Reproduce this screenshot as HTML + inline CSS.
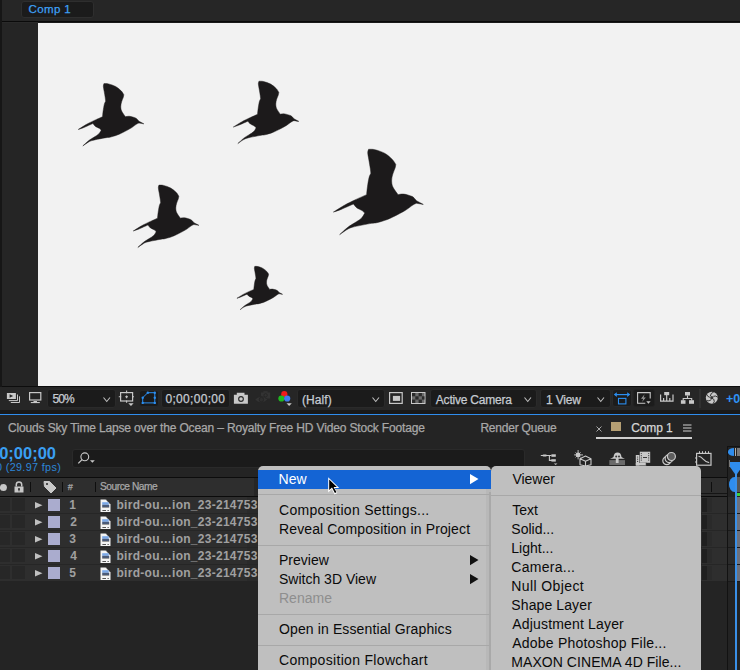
<!DOCTYPE html>
<html><head><meta charset="utf-8">
<style>
*{margin:0;padding:0;box-sizing:border-box}
html,body{width:740px;height:670px;overflow:hidden;background:#242424;font-family:"Liberation Sans",sans-serif;position:relative}
.a{position:absolute}
.t{position:absolute;white-space:nowrap;line-height:1}
svg{position:absolute;overflow:visible}
</style></head><body>
<div class="a" style="left:0px;top:0px;width:740px;height:21px;background:#262626;"></div>
<div class="a" style="left:21px;top:1px;width:73px;height:17px;background:#1b1b1b;border:1px solid #2e2e2e;border-radius:3px"></div>
<div class="t" style="left:28.50px;top:3.87px;font-size:11.5px;color:#3ea0f5;letter-spacing:0.400px;-webkit-text-stroke:0.25px currentColor">Comp 1</div>
<div class="a" style="left:2px;top:21px;width:738px;height:1px;background:#0a0a0a;"></div>
<div class="a" style="left:2px;top:22px;width:738px;height:1px;background:#1a1a1a;"></div>
<div class="a" style="left:2px;top:22px;width:36px;height:1px;background:#2a2a2a;"></div>
<div class="a" style="left:2px;top:23px;width:36px;height:363px;background:#252525;"></div>
<div class="a" style="left:0px;top:0px;width:2px;height:410px;background:#161616;"></div>
<div class="a" style="left:38px;top:23px;width:702px;height:363px;background:#f2f2f2;"></div>
<svg style="left:0;top:0" width="740" height="386"><path transform="translate(75.8 80.5) scale(0.1035)" d="M272.0 30.0 C279.5 30.5 298.2 28.3 317.0 33.0 C335.8 37.7 364.8 46.8 385.0 58.0 C405.2 69.2 424.8 86.8 438.0 100.0 C451.2 113.2 459.7 130.8 464.0 137.0 C463.2 141.3 462.5 151.7 459.0 163.0 C455.5 174.3 447.0 190.8 443.0 205.0 C439.0 219.2 435.0 233.0 435.0 248.0 C435.0 263.0 435.5 278.0 443.0 295.0 C450.5 312.0 473.8 340.8 480.0 350.0 C486.7 349.3 503.8 344.0 520.0 346.0 C536.2 348.0 564.3 356.8 577.0 362.0 C589.7 367.2 590.5 371.8 596.0 377.0 C601.5 382.2 607.7 390.3 610.0 393.0 L658.0 419.0 L610.0 411.0 C605.8 413.0 598.3 414.5 585.0 423.0 C571.7 431.5 551.0 449.2 530.0 462.0 C509.0 474.8 480.7 489.2 459.0 500.0 C437.3 510.8 421.5 519.0 400.0 527.0 C378.5 535.0 347.5 543.8 330.0 548.0 C312.5 552.2 312.3 549.2 295.0 552.0 C277.7 554.8 248.8 560.3 226.0 565.0 C203.2 569.7 175.5 574.8 158.0 580.0 C140.5 585.2 136.0 587.3 121.0 596.0 C106.0 604.7 76.8 626.0 68.0 632.0 C77.7 623.3 108.3 593.8 126.0 580.0 C143.7 566.2 158.2 559.5 174.0 549.0 C189.8 538.5 209.2 528.5 221.0 517.0 C232.8 505.5 241.0 486.2 245.0 480.0 C241.8 477.0 235.2 468.0 226.0 462.0 C216.8 456.0 200.2 451.7 190.0 444.0 C179.8 436.3 169.2 420.7 165.0 416.0 C150.7 422.3 102.5 444.5 79.0 454.0 C55.5 463.5 33.2 469.8 24.0 473.0 C37.5 464.7 80.0 437.2 105.0 423.0 C130.0 408.8 148.5 400.2 174.0 388.0 C199.5 375.8 244.0 356.3 258.0 350.0 C259.0 340.8 261.2 314.8 264.0 295.0 C266.8 275.2 271.0 246.8 275.0 231.0 C279.0 215.2 285.8 205.2 288.0 200.0 C287.3 194.2 286.3 180.8 284.0 165.0 C281.7 149.2 277.0 123.3 274.0 105.0 C271.0 86.7 266.3 67.5 266.0 55.0 C265.7 42.5 271.0 34.2 272.0 30.0 Z" fill="#1c1a1b" stroke="#1c1a1b" stroke-width="0.45" vector-effect="non-scaling-stroke"/><path transform="translate(230.8 78.1) scale(0.1035)" d="M272.0 30.0 C279.5 30.5 298.2 28.3 317.0 33.0 C335.8 37.7 364.8 46.8 385.0 58.0 C405.2 69.2 424.8 86.8 438.0 100.0 C451.2 113.2 459.7 130.8 464.0 137.0 C463.2 141.3 462.5 151.7 459.0 163.0 C455.5 174.3 447.0 190.8 443.0 205.0 C439.0 219.2 435.0 233.0 435.0 248.0 C435.0 263.0 435.5 278.0 443.0 295.0 C450.5 312.0 473.8 340.8 480.0 350.0 C486.7 349.3 503.8 344.0 520.0 346.0 C536.2 348.0 564.3 356.8 577.0 362.0 C589.7 367.2 590.5 371.8 596.0 377.0 C601.5 382.2 607.7 390.3 610.0 393.0 L658.0 419.0 L610.0 411.0 C605.8 413.0 598.3 414.5 585.0 423.0 C571.7 431.5 551.0 449.2 530.0 462.0 C509.0 474.8 480.7 489.2 459.0 500.0 C437.3 510.8 421.5 519.0 400.0 527.0 C378.5 535.0 347.5 543.8 330.0 548.0 C312.5 552.2 312.3 549.2 295.0 552.0 C277.7 554.8 248.8 560.3 226.0 565.0 C203.2 569.7 175.5 574.8 158.0 580.0 C140.5 585.2 136.0 587.3 121.0 596.0 C106.0 604.7 76.8 626.0 68.0 632.0 C77.7 623.3 108.3 593.8 126.0 580.0 C143.7 566.2 158.2 559.5 174.0 549.0 C189.8 538.5 209.2 528.5 221.0 517.0 C232.8 505.5 241.0 486.2 245.0 480.0 C241.8 477.0 235.2 468.0 226.0 462.0 C216.8 456.0 200.2 451.7 190.0 444.0 C179.8 436.3 169.2 420.7 165.0 416.0 C150.7 422.3 102.5 444.5 79.0 454.0 C55.5 463.5 33.2 469.8 24.0 473.0 C37.5 464.7 80.0 437.2 105.0 423.0 C130.0 408.8 148.5 400.2 174.0 388.0 C199.5 375.8 244.0 356.3 258.0 350.0 C259.0 340.8 261.2 314.8 264.0 295.0 C266.8 275.2 271.0 246.8 275.0 231.0 C279.0 215.2 285.8 205.2 288.0 200.0 C287.3 194.2 286.3 180.8 284.0 165.0 C281.7 149.2 277.0 123.3 274.0 105.0 C271.0 86.7 266.3 67.5 266.0 55.0 C265.7 42.5 271.0 34.2 272.0 30.0 Z" fill="#1c1a1b" stroke="#1c1a1b" stroke-width="0.45" vector-effect="non-scaling-stroke"/><path transform="translate(130.8 182) scale(0.1035)" d="M272.0 30.0 C279.5 30.5 298.2 28.3 317.0 33.0 C335.8 37.7 364.8 46.8 385.0 58.0 C405.2 69.2 424.8 86.8 438.0 100.0 C451.2 113.2 459.7 130.8 464.0 137.0 C463.2 141.3 462.5 151.7 459.0 163.0 C455.5 174.3 447.0 190.8 443.0 205.0 C439.0 219.2 435.0 233.0 435.0 248.0 C435.0 263.0 435.5 278.0 443.0 295.0 C450.5 312.0 473.8 340.8 480.0 350.0 C486.7 349.3 503.8 344.0 520.0 346.0 C536.2 348.0 564.3 356.8 577.0 362.0 C589.7 367.2 590.5 371.8 596.0 377.0 C601.5 382.2 607.7 390.3 610.0 393.0 L658.0 419.0 L610.0 411.0 C605.8 413.0 598.3 414.5 585.0 423.0 C571.7 431.5 551.0 449.2 530.0 462.0 C509.0 474.8 480.7 489.2 459.0 500.0 C437.3 510.8 421.5 519.0 400.0 527.0 C378.5 535.0 347.5 543.8 330.0 548.0 C312.5 552.2 312.3 549.2 295.0 552.0 C277.7 554.8 248.8 560.3 226.0 565.0 C203.2 569.7 175.5 574.8 158.0 580.0 C140.5 585.2 136.0 587.3 121.0 596.0 C106.0 604.7 76.8 626.0 68.0 632.0 C77.7 623.3 108.3 593.8 126.0 580.0 C143.7 566.2 158.2 559.5 174.0 549.0 C189.8 538.5 209.2 528.5 221.0 517.0 C232.8 505.5 241.0 486.2 245.0 480.0 C241.8 477.0 235.2 468.0 226.0 462.0 C216.8 456.0 200.2 451.7 190.0 444.0 C179.8 436.3 169.2 420.7 165.0 416.0 C150.7 422.3 102.5 444.5 79.0 454.0 C55.5 463.5 33.2 469.8 24.0 473.0 C37.5 464.7 80.0 437.2 105.0 423.0 C130.0 408.8 148.5 400.2 174.0 388.0 C199.5 375.8 244.0 356.3 258.0 350.0 C259.0 340.8 261.2 314.8 264.0 295.0 C266.8 275.2 271.0 246.8 275.0 231.0 C279.0 215.2 285.8 205.2 288.0 200.0 C287.3 194.2 286.3 180.8 284.0 165.0 C281.7 149.2 277.0 123.3 274.0 105.0 C271.0 86.7 266.3 67.5 266.0 55.0 C265.7 42.5 271.0 34.2 272.0 30.0 Z" fill="#1c1a1b" stroke="#1c1a1b" stroke-width="0.45" vector-effect="non-scaling-stroke"/><path transform="translate(330 145) scale(0.1418)" d="M272.0 30.0 C279.5 30.5 298.2 28.3 317.0 33.0 C335.8 37.7 364.8 46.8 385.0 58.0 C405.2 69.2 424.8 86.8 438.0 100.0 C451.2 113.2 459.7 130.8 464.0 137.0 C463.2 141.3 462.5 151.7 459.0 163.0 C455.5 174.3 447.0 190.8 443.0 205.0 C439.0 219.2 435.0 233.0 435.0 248.0 C435.0 263.0 435.5 278.0 443.0 295.0 C450.5 312.0 473.8 340.8 480.0 350.0 C486.7 349.3 503.8 344.0 520.0 346.0 C536.2 348.0 564.3 356.8 577.0 362.0 C589.7 367.2 590.5 371.8 596.0 377.0 C601.5 382.2 607.7 390.3 610.0 393.0 L658.0 419.0 L610.0 411.0 C605.8 413.0 598.3 414.5 585.0 423.0 C571.7 431.5 551.0 449.2 530.0 462.0 C509.0 474.8 480.7 489.2 459.0 500.0 C437.3 510.8 421.5 519.0 400.0 527.0 C378.5 535.0 347.5 543.8 330.0 548.0 C312.5 552.2 312.3 549.2 295.0 552.0 C277.7 554.8 248.8 560.3 226.0 565.0 C203.2 569.7 175.5 574.8 158.0 580.0 C140.5 585.2 136.0 587.3 121.0 596.0 C106.0 604.7 76.8 626.0 68.0 632.0 C77.7 623.3 108.3 593.8 126.0 580.0 C143.7 566.2 158.2 559.5 174.0 549.0 C189.8 538.5 209.2 528.5 221.0 517.0 C232.8 505.5 241.0 486.2 245.0 480.0 C241.8 477.0 235.2 468.0 226.0 462.0 C216.8 456.0 200.2 451.7 190.0 444.0 C179.8 436.3 169.2 420.7 165.0 416.0 C150.7 422.3 102.5 444.5 79.0 454.0 C55.5 463.5 33.2 469.8 24.0 473.0 C37.5 464.7 80.0 437.2 105.0 423.0 C130.0 408.8 148.5 400.2 174.0 388.0 C199.5 375.8 244.0 356.3 258.0 350.0 C259.0 340.8 261.2 314.8 264.0 295.0 C266.8 275.2 271.0 246.8 275.0 231.0 C279.0 215.2 285.8 205.2 288.0 200.0 C287.3 194.2 286.3 180.8 284.0 165.0 C281.7 149.2 277.0 123.3 274.0 105.0 C271.0 86.7 266.3 67.5 266.0 55.0 C265.7 42.5 271.0 34.2 272.0 30.0 Z" fill="#1c1a1b" stroke="#1c1a1b" stroke-width="0.45" vector-effect="non-scaling-stroke"/><path transform="translate(235.2 264.2) scale(0.072)" d="M272.0 30.0 C279.5 30.5 298.2 28.3 317.0 33.0 C335.8 37.7 364.8 46.8 385.0 58.0 C405.2 69.2 424.8 86.8 438.0 100.0 C451.2 113.2 459.7 130.8 464.0 137.0 C463.2 141.3 462.5 151.7 459.0 163.0 C455.5 174.3 447.0 190.8 443.0 205.0 C439.0 219.2 435.0 233.0 435.0 248.0 C435.0 263.0 435.5 278.0 443.0 295.0 C450.5 312.0 473.8 340.8 480.0 350.0 C486.7 349.3 503.8 344.0 520.0 346.0 C536.2 348.0 564.3 356.8 577.0 362.0 C589.7 367.2 590.5 371.8 596.0 377.0 C601.5 382.2 607.7 390.3 610.0 393.0 L658.0 419.0 L610.0 411.0 C605.8 413.0 598.3 414.5 585.0 423.0 C571.7 431.5 551.0 449.2 530.0 462.0 C509.0 474.8 480.7 489.2 459.0 500.0 C437.3 510.8 421.5 519.0 400.0 527.0 C378.5 535.0 347.5 543.8 330.0 548.0 C312.5 552.2 312.3 549.2 295.0 552.0 C277.7 554.8 248.8 560.3 226.0 565.0 C203.2 569.7 175.5 574.8 158.0 580.0 C140.5 585.2 136.0 587.3 121.0 596.0 C106.0 604.7 76.8 626.0 68.0 632.0 C77.7 623.3 108.3 593.8 126.0 580.0 C143.7 566.2 158.2 559.5 174.0 549.0 C189.8 538.5 209.2 528.5 221.0 517.0 C232.8 505.5 241.0 486.2 245.0 480.0 C241.8 477.0 235.2 468.0 226.0 462.0 C216.8 456.0 200.2 451.7 190.0 444.0 C179.8 436.3 169.2 420.7 165.0 416.0 C150.7 422.3 102.5 444.5 79.0 454.0 C55.5 463.5 33.2 469.8 24.0 473.0 C37.5 464.7 80.0 437.2 105.0 423.0 C130.0 408.8 148.5 400.2 174.0 388.0 C199.5 375.8 244.0 356.3 258.0 350.0 C259.0 340.8 261.2 314.8 264.0 295.0 C266.8 275.2 271.0 246.8 275.0 231.0 C279.0 215.2 285.8 205.2 288.0 200.0 C287.3 194.2 286.3 180.8 284.0 165.0 C281.7 149.2 277.0 123.3 274.0 105.0 C271.0 86.7 266.3 67.5 266.0 55.0 C265.7 42.5 271.0 34.2 272.0 30.0 Z" fill="#1c1a1b" stroke="#1c1a1b" stroke-width="0.45" vector-effect="non-scaling-stroke"/></svg>
<div class="a" style="left:2px;top:386px;width:738px;height:1px;background:#0d0d0d;"></div>
<div class="a" style="left:0px;top:387px;width:740px;height:23px;background:#262626;"></div>
<div class="a" style="left:0px;top:410px;width:740px;height:4px;background:#191919;"></div>
<div class="a" style="left:0px;top:414px;width:740px;height:1px;background:#2f8ded;"></div>
<svg style="left:6px;top:392px" width="16" height="12">
<rect x="0.9" y="1" width="9" height="6" fill="#c8c8c8"/>
<path d="M3.6 2.3 L7.2 4 L3.6 5.7Z" fill="#262626"/>
<path d="M11.5 2.5 V8.6 H2.8" fill="none" stroke="#c8c8c8" stroke-width="1"/>
<path d="M13.5 4.3 V10.5 H4.8" fill="none" stroke="#c8c8c8" stroke-width="1"/>
</svg>
<svg style="left:29px;top:392px" width="13" height="12">
<rect x="0.6" y="0.6" width="11.2" height="7.4" fill="none" stroke="#c8c8c8" stroke-width="1.2"/>
<rect x="4.5" y="9" width="3.5" height="1.2" fill="#c8c8c8"/>
<rect x="1.8" y="10" width="9" height="1.1" fill="#c8c8c8"/>
</svg>
<div class="a" style="left:47px;top:389px;width:69px;height:19px;background:#1b1b1b;border:1px solid #2a2a2a;border-radius:3px"></div>
<div class="t" style="left:52.50px;top:393.24px;font-size:12px;color:#c6cbd2;letter-spacing:-0.950px;-webkit-text-stroke:0.25px currentColor">50%</div>
<svg style="left:102.5px;top:396.5px" width="7.5" height="5"><path d="M0.5 0.5 L3.75 4.5 L7.0 0.5" fill="none" stroke="#bdbdbd" stroke-width="1.1"/></svg>
<svg style="left:118px;top:390px" width="17" height="17">
<rect x="2.6" y="2.6" width="12" height="8.4" fill="none" stroke="#c8c8c8" stroke-width="1.2"/>
<path d="M8.6 0.6 V3.2 M8.6 10.4 V12.8 M0.8 6.8 H3.2 M14 6.8 H16" stroke="#c8c8c8" stroke-width="1.1"/>
<path d="M7.2 6.8 H10 M8.6 5.4 V8.2" stroke="#c8c8c8" stroke-width="1.1"/>
<path d="M10.3 13.2 H15.6 L12.95 16Z" fill="#c8c8c8"/>
</svg>
<div class="a" style="left:139px;top:390px;width:20px;height:17px;background:#1a1a1a;border:1px solid #262626;border-radius:3px"></div>
<svg style="left:141px;top:391px" width="17" height="15">
<path d="M1.7 6.7 L6.8 1.7 H13.8 V11.9 H1.7Z" fill="none" stroke="#2b8ef0" stroke-width="1"/>
<g fill="#2b8ef0"><circle cx="1.7" cy="6.7" r="1.2"/><circle cx="6.8" cy="1.7" r="1.2"/><circle cx="13.8" cy="1.7" r="1.2"/><circle cx="13.8" cy="6.7" r="1.2"/><circle cx="13.8" cy="11.9" r="1.2"/><circle cx="1.7" cy="11.9" r="1.2"/></g>
</svg>
<div class="a" style="left:161px;top:389px;width:69px;height:19px;background:#1b1b1b;border:1px solid #2a2a2a;border-radius:3px"></div>
<div class="t" style="left:165.40px;top:393.14px;font-size:12px;color:#c6cbd2;letter-spacing:0.322px;-webkit-text-stroke:0.25px currentColor">0;00;00;00</div>
<svg style="left:233px;top:392px" width="16" height="13">
<path d="M3.8 0.8 H11.5 V2.8 H14.9 V11.8 H0.9 V2.8 H3.8Z" fill="#c8c8c8"/>
<circle cx="8" cy="7" r="2.9" fill="#262626"/><circle cx="8" cy="7" r="1.8" fill="#c8c8c8"/>
</svg>
<svg style="left:254px;top:390px" width="17" height="15">
<rect x="7" y="2.5" width="9.2" height="6" fill="#333"/><rect x="9.3" y="1.2" width="4.4" height="1.6" fill="#333"/>
<circle cx="11.6" cy="5.3" r="1.7" fill="none" stroke="#262626" stroke-width="1"/>
<path d="M0.6 9.6 Q7 3.2 13.8 9.6 Q7 16 0.6 9.6Z" fill="#333" stroke="#262626" stroke-width="0.8"/>
<circle cx="7.4" cy="9.6" r="2.2" fill="#2e2e2e" stroke="#262626" stroke-width="1"/>
</svg>
<svg style="left:278px;top:390px" width="16" height="17">
<circle cx="6.3" cy="4.2" r="3.1" fill="#f01a1a"/>
<circle cx="3.4" cy="8.5" r="3.1" fill="#1fb81f"/>
<circle cx="9.2" cy="8.5" r="3.1" fill="#3f7cf0"/>
<path d="M8.5 13.3 H13.8 L11.15 16Z" fill="#c8c8c8"/>
</svg>
<div class="a" style="left:297px;top:389px;width:88px;height:19px;background:#1b1b1b;border:1px solid #2a2a2a;border-radius:3px"></div>
<div class="t" style="left:302.00px;top:393.84px;font-size:12px;color:#c6cbd2;letter-spacing:0.060px;-webkit-text-stroke:0.25px currentColor">(Half)</div>
<svg style="left:371.8px;top:396.5px" width="7.5" height="5"><path d="M0.5 0.5 L3.75 4.5 L7.0 0.5" fill="none" stroke="#bdbdbd" stroke-width="1.1"/></svg>
<svg style="left:389px;top:392px" width="14" height="12">
<rect x="0.6" y="0.6" width="12.6" height="10.8" fill="none" stroke="#c8c8c8" stroke-width="1.2"/>
<rect x="3.9" y="3.9" width="7.2" height="5" fill="#c8c8c8"/>
</svg>
<svg style="left:411px;top:392px" width="15" height="12">
<rect x="0.5" y="0.5" width="13.5" height="11" fill="#6a6a6a" stroke="#c8c8c8" stroke-width="1"/>
<g fill="#2a2a2a"><rect x="1" y="1" width="3.3" height="3.3"/><rect x="7.6" y="1" width="3.3" height="3.3"/><rect x="4.3" y="4.3" width="3.3" height="3.3"/><rect x="10.9" y="4.3" width="2.6" height="3.3"/><rect x="1" y="7.6" width="3.3" height="3.4"/><rect x="7.6" y="7.6" width="3.3" height="3.4"/></g>
</svg>
<div class="a" style="left:430px;top:389px;width:107px;height:19px;background:#1b1b1b;border:1px solid #2a2a2a;border-radius:3px"></div>
<div class="t" style="left:435.80px;top:393.84px;font-size:12px;color:#c6cbd2;letter-spacing:-0.208px;-webkit-text-stroke:0.25px currentColor">Active Camera</div>
<svg style="left:523.5px;top:396.5px" width="7.5" height="5"><path d="M0.5 0.5 L3.75 4.5 L7.0 0.5" fill="none" stroke="#bdbdbd" stroke-width="1.1"/></svg>
<div class="a" style="left:540px;top:389px;width:71px;height:19px;background:#1b1b1b;border:1px solid #2a2a2a;border-radius:3px"></div>
<div class="t" style="left:546.00px;top:393.84px;font-size:12px;color:#c6cbd2;letter-spacing:-0.180px;-webkit-text-stroke:0.25px currentColor">1 View</div>
<svg style="left:597.2px;top:396.5px" width="7.5" height="5"><path d="M0.5 0.5 L3.75 4.5 L7.0 0.5" fill="none" stroke="#bdbdbd" stroke-width="1.1"/></svg>
<div class="a" style="left:612px;top:389px;width:20px;height:18px;background:#1c1c1c;border:1px solid #2a2a2a;border-radius:3px"></div>
<svg style="left:613px;top:392px" width="18" height="14">
<path d="M2.5 2.6 H15.5" stroke="#2b8ef0" stroke-width="1.2"/>
<path d="M0.8 2.6 L3.8 0.3 V4.9Z M17.2 2.6 L14.2 0.3 V4.9Z" fill="#2b8ef0"/>
<rect x="5.5" y="6.4" width="7.4" height="5.5" fill="none" stroke="#2b8ef0" stroke-width="1.1"/>
</svg>
<div class="a" style="left:633px;top:389px;width:22px;height:18px;background:#1c1c1c;border:1px solid #222;border-radius:3px"></div>
<svg style="left:636px;top:391px" width="17" height="14">
<path d="M14.2 7.4 V1.6 H1.6 V12.3 H9.3" fill="none" stroke="#c8c8c8" stroke-width="1.1"/>
<path d="M8.6 3.2 L5 7.8 H7.3 L6 11 L9.8 6.4 H7.5Z" fill="#9a9a9a"/>
<path d="M10.3 10.2 H14.6 L12.45 12.8Z" fill="#c8c8c8"/>
</svg>
<svg style="left:659px;top:391px" width="16" height="13">
<rect x="5.2" y="1" width="5" height="3.2" fill="#c8c8c8"/>
<path d="M1.6 3.5 V10.2 H14 V3.5 M7.7 4 V10 M4.6 10 V7 M10.8 10 V7" fill="none" stroke="#c8c8c8" stroke-width="1.2"/>
</svg>
<svg style="left:680px;top:391px" width="15" height="14">
<rect x="5" y="1" width="5" height="3.5" fill="#c8c8c8"/>
<path d="M7.5 4.5 V7.5 M3.2 9.5 V7.5 H11.7 V9.5" fill="none" stroke="#c8c8c8" stroke-width="1.1"/>
<rect x="0.9" y="9.2" width="4.6" height="3.6" fill="#c8c8c8"/><rect x="9" y="9.2" width="5" height="3.6" fill="#c8c8c8"/>
</svg>
<div class="a" style="left:699px;top:389px;width:2px;height:19px;background:#303030;"></div>
<svg style="left:705px;top:391px" width="14" height="14">
<circle cx="6.8" cy="6.7" r="6" fill="#c8c8c8"/>
<g stroke="#262626" stroke-width="0.9" fill="none">
<path d="M5.3 5.2 Q5.5 2 8.8 0.9"/><path d="M8.3 5.3 Q11 4.3 12.8 6.3"/><path d="M8.6 7.9 Q10.2 10.7 8.2 12.5"/><path d="M6.3 8.7 Q4 10.6 1.6 9.6"/><path d="M4.8 6.4 Q2.2 5.6 1.6 3.2"/>
</g>
<circle cx="6.8" cy="6.7" r="1.6" fill="#3a3a3a"/>
</svg>
<div class="t" style="left:726.00px;top:392.62px;font-size:12.5px;color:#2f92f5;font-weight:700;">+0</div>
<div class="t" style="left:8.00px;top:421.84px;font-size:12px;color:#a8a8a8;letter-spacing:-0.151px;-webkit-text-stroke:0.25px currentColor">Clouds Sky Time Lapse over the Ocean – Royalty Free HD Video Stock Footage</div>
<div class="t" style="left:480.40px;top:421.84px;font-size:12px;color:#a8a8a8;letter-spacing:-0.218px;-webkit-text-stroke:0.25px currentColor">Render Queue</div>
<svg style="left:595.5px;top:425.5px" width="6" height="6"><path d="M0.5 0.5 L5.5 5.5 M5.5 0.5 L0.5 5.5" stroke="#a8a8a8" stroke-width="1"/></svg>
<div class="a" style="left:611px;top:422px;width:10px;height:9px;background:#b59f73;"></div>
<div class="t" style="left:631.20px;top:421.84px;font-size:12px;color:#d6d6d6;letter-spacing:-0.100px;-webkit-text-stroke:0.25px currentColor">Comp 1</div>
<svg style="left:683px;top:424px" width="9" height="8"><path d="M0 1 H8.5 M0 4 H8.5 M0 7 H8.5" stroke="#cfcfcf" stroke-width="1.1"/></svg>
<div class="a" style="left:596px;top:437px;width:96px;height:2px;background:#cfcfcf;"></div>
<div class="t" style="left:-24.70px;top:445.03px;font-size:16.5px;color:#3a9ff2;font-weight:700;">0;00;00;00</div>
<div class="t" style="left:-4.00px;top:462.46px;font-size:10.8px;color:#2d86d8;letter-spacing:0.350px;">0 (29.97 fps)</div>
<div class="a" style="left:72px;top:449px;width:453px;height:19px;background:#1b1b1b;border:1px solid #2a2a2a;border-radius:3px"></div>
<svg style="left:77px;top:451px" width="20" height="15">
<circle cx="7.8" cy="5.8" r="3.9" fill="none" stroke="#c8c8c8" stroke-width="1.1"/>
<path d="M5 8.6 L1.3 12.4" stroke="#c8c8c8" stroke-width="1.3"/>
<path d="M13 9.3 H17.8 L15.4 11.7Z" fill="#c8c8c8"/>
</svg>
<div class="a" style="left:0px;top:477px;width:727px;height:1px;background:#0c0c0c;"></div>
<div class="a" style="left:0px;top:478px;width:727px;height:18px;background:#2e2e2e;"></div>
<div class="a" style="left:0px;top:496px;width:727px;height:1px;background:#0b0b0b;"></div>
<div class="a" style="left:30px;top:482px;width:1px;height:10px;background:#0e0e0e;"></div>
<div class="a" style="left:62px;top:482px;width:1px;height:10px;background:#0e0e0e;"></div>
<div class="a" style="left:95px;top:482px;width:1px;height:10px;background:#0e0e0e;"></div>
<svg style="left:0px;top:484px" width="8" height="8"><circle cx="3.4" cy="3.6" r="3.5" fill="#c8c8c8"/></svg>
<svg style="left:14px;top:481px" width="10" height="12">
<path d="M2.3 5.5 V3.6 A2.7 2.7 0 0 1 7.7 3.6 V5.5" fill="none" stroke="#c8c8c8" stroke-width="1.5"/>
<rect x="0.5" y="5.5" width="9" height="6" fill="#c8c8c8"/>
<circle cx="5" cy="8" r="1" fill="#2e2e2e"/><rect x="4.5" y="8" width="1" height="2.3" fill="#2e2e2e"/>
</svg>
<svg style="left:43px;top:480px" width="14" height="14">
<path d="M1 1.5 H6.5 L13 8 L8 13 L1.5 6.5Z" fill="#c8c8c8" stroke="#c8c8c8" stroke-width="1" stroke-linejoin="round"/>
<circle cx="4" cy="4" r="1.1" fill="#2e2e2e"/>
</svg>
<div class="a" style="left:254px;top:478px;width:4px;height:18px;background:#262626;"></div>
<div class="t" style="left:67.80px;top:483.21px;font-size:9.2px;color:#a8a8a8;-webkit-text-stroke:0.25px currentColor">#</div>
<div class="t" style="left:100.00px;top:482.47px;font-size:10.2px;color:#a8a8a8;letter-spacing:-0.450px;-webkit-text-stroke:0.25px currentColor">Source Name</div>
<div class="a" style="left:0px;top:497px;width:727px;height:16px;background:#2e2e2e;"></div>
<div class="a" style="left:0px;top:513px;width:727px;height:1px;background:#262626;"></div>
<div class="a" style="left:0px;top:498px;width:10px;height:13px;background:#272727;"></div>
<div class="a" style="left:12px;top:498px;width:13px;height:13px;background:#272727;"></div>
<svg style="left:35px;top:502px" width="8" height="7"><path d="M0 0 L7.5 3.2 L0 6.4Z" fill="#c0c0c0"/></svg>
<div class="a" style="left:48px;top:499px;width:12px;height:12px;background:#aaacce;"></div>
<div class="t" style="left:69.20px;top:498.84px;font-size:12px;color:#a0a0a0;font-weight:700;">1</div>
<svg style="left:99.5px;top:498.5px" width="12" height="14">
<path d="M0.5 0.5 H6.2 L10.5 5 V13 H0.5Z" fill="#f4f4f4"/>
<path d="M6.2 0.5 L10.5 5" stroke="#222" stroke-width="0.9"/>
<rect x="2.2" y="3.2" width="6.5" height="2.6" fill="#7aa8e8"/>
<rect x="2.2" y="5.8" width="7" height="2.2" fill="#4a5a78"/>
<rect x="2.2" y="8" width="7" height="1" fill="#9a9a9a"/>
<path d="M2.4 11.5 H6 M7.5 11.5 H8.8" stroke="#555" stroke-width="1.1"/>
</svg>
<div class="a" style="left:247px;top:497px;width:11px;height:16px;background:#2a2a2a;"></div>
<div class="t" style="left:116.50px;top:498.84px;font-size:12px;color:#a0a0a0;font-weight:700;letter-spacing:0.275px;">bird-ou…ion_23-214753</div>
<div class="a" style="left:0px;top:514px;width:727px;height:16px;background:#2e2e2e;"></div>
<div class="a" style="left:0px;top:530px;width:727px;height:1px;background:#262626;"></div>
<div class="a" style="left:0px;top:515px;width:10px;height:13px;background:#272727;"></div>
<div class="a" style="left:12px;top:515px;width:13px;height:13px;background:#272727;"></div>
<svg style="left:35px;top:519px" width="8" height="7"><path d="M0 0 L7.5 3.2 L0 6.4Z" fill="#c0c0c0"/></svg>
<div class="a" style="left:48px;top:516px;width:12px;height:12px;background:#aaacce;"></div>
<div class="t" style="left:70.20px;top:515.84px;font-size:12px;color:#a0a0a0;font-weight:700;">2</div>
<svg style="left:99.5px;top:515.5px" width="12" height="14">
<path d="M0.5 0.5 H6.2 L10.5 5 V13 H0.5Z" fill="#f4f4f4"/>
<path d="M6.2 0.5 L10.5 5" stroke="#222" stroke-width="0.9"/>
<rect x="2.2" y="3.2" width="6.5" height="2.6" fill="#7aa8e8"/>
<rect x="2.2" y="5.8" width="7" height="2.2" fill="#4a5a78"/>
<rect x="2.2" y="8" width="7" height="1" fill="#9a9a9a"/>
<path d="M2.4 11.5 H6 M7.5 11.5 H8.8" stroke="#555" stroke-width="1.1"/>
</svg>
<div class="a" style="left:247px;top:514px;width:11px;height:16px;background:#2a2a2a;"></div>
<div class="t" style="left:116.50px;top:515.84px;font-size:12px;color:#a0a0a0;font-weight:700;letter-spacing:0.275px;">bird-ou…ion_23-214753</div>
<div class="a" style="left:0px;top:531px;width:727px;height:16px;background:#2e2e2e;"></div>
<div class="a" style="left:0px;top:547px;width:727px;height:1px;background:#262626;"></div>
<div class="a" style="left:0px;top:532px;width:10px;height:13px;background:#272727;"></div>
<div class="a" style="left:12px;top:532px;width:13px;height:13px;background:#272727;"></div>
<svg style="left:35px;top:536px" width="8" height="7"><path d="M0 0 L7.5 3.2 L0 6.4Z" fill="#c0c0c0"/></svg>
<div class="a" style="left:48px;top:533px;width:12px;height:12px;background:#aaacce;"></div>
<div class="t" style="left:69.20px;top:532.84px;font-size:12px;color:#a0a0a0;font-weight:700;">3</div>
<svg style="left:99.5px;top:532.5px" width="12" height="14">
<path d="M0.5 0.5 H6.2 L10.5 5 V13 H0.5Z" fill="#f4f4f4"/>
<path d="M6.2 0.5 L10.5 5" stroke="#222" stroke-width="0.9"/>
<rect x="2.2" y="3.2" width="6.5" height="2.6" fill="#7aa8e8"/>
<rect x="2.2" y="5.8" width="7" height="2.2" fill="#4a5a78"/>
<rect x="2.2" y="8" width="7" height="1" fill="#9a9a9a"/>
<path d="M2.4 11.5 H6 M7.5 11.5 H8.8" stroke="#555" stroke-width="1.1"/>
</svg>
<div class="a" style="left:247px;top:531px;width:11px;height:16px;background:#2a2a2a;"></div>
<div class="t" style="left:116.50px;top:532.84px;font-size:12px;color:#a0a0a0;font-weight:700;letter-spacing:0.275px;">bird-ou…ion_23-214753</div>
<div class="a" style="left:0px;top:548px;width:727px;height:16px;background:#2e2e2e;"></div>
<div class="a" style="left:0px;top:564px;width:727px;height:1px;background:#262626;"></div>
<div class="a" style="left:0px;top:549px;width:10px;height:13px;background:#272727;"></div>
<div class="a" style="left:12px;top:549px;width:13px;height:13px;background:#272727;"></div>
<svg style="left:35px;top:553px" width="8" height="7"><path d="M0 0 L7.5 3.2 L0 6.4Z" fill="#c0c0c0"/></svg>
<div class="a" style="left:48px;top:550px;width:12px;height:12px;background:#aaacce;"></div>
<div class="t" style="left:70.20px;top:549.84px;font-size:12px;color:#a0a0a0;font-weight:700;">4</div>
<svg style="left:99.5px;top:549.5px" width="12" height="14">
<path d="M0.5 0.5 H6.2 L10.5 5 V13 H0.5Z" fill="#f4f4f4"/>
<path d="M6.2 0.5 L10.5 5" stroke="#222" stroke-width="0.9"/>
<rect x="2.2" y="3.2" width="6.5" height="2.6" fill="#7aa8e8"/>
<rect x="2.2" y="5.8" width="7" height="2.2" fill="#4a5a78"/>
<rect x="2.2" y="8" width="7" height="1" fill="#9a9a9a"/>
<path d="M2.4 11.5 H6 M7.5 11.5 H8.8" stroke="#555" stroke-width="1.1"/>
</svg>
<div class="a" style="left:247px;top:548px;width:11px;height:16px;background:#2a2a2a;"></div>
<div class="t" style="left:116.50px;top:549.84px;font-size:12px;color:#a0a0a0;font-weight:700;letter-spacing:0.275px;">bird-ou…ion_23-214753</div>
<div class="a" style="left:0px;top:565px;width:727px;height:16px;background:#2e2e2e;"></div>
<div class="a" style="left:0px;top:581px;width:727px;height:1px;background:#262626;"></div>
<div class="a" style="left:0px;top:566px;width:10px;height:13px;background:#272727;"></div>
<div class="a" style="left:12px;top:566px;width:13px;height:13px;background:#272727;"></div>
<svg style="left:35px;top:570px" width="8" height="7"><path d="M0 0 L7.5 3.2 L0 6.4Z" fill="#c0c0c0"/></svg>
<div class="a" style="left:48px;top:567px;width:12px;height:12px;background:#aaacce;"></div>
<div class="t" style="left:69.20px;top:566.84px;font-size:12px;color:#a0a0a0;font-weight:700;">5</div>
<svg style="left:99.5px;top:566.5px" width="12" height="14">
<path d="M0.5 0.5 H6.2 L10.5 5 V13 H0.5Z" fill="#f4f4f4"/>
<path d="M6.2 0.5 L10.5 5" stroke="#222" stroke-width="0.9"/>
<rect x="2.2" y="3.2" width="6.5" height="2.6" fill="#7aa8e8"/>
<rect x="2.2" y="5.8" width="7" height="2.2" fill="#4a5a78"/>
<rect x="2.2" y="8" width="7" height="1" fill="#9a9a9a"/>
<path d="M2.4 11.5 H6 M7.5 11.5 H8.8" stroke="#555" stroke-width="1.1"/>
</svg>
<div class="a" style="left:247px;top:565px;width:11px;height:16px;background:#2a2a2a;"></div>
<div class="t" style="left:116.50px;top:566.84px;font-size:12px;color:#a0a0a0;font-weight:700;letter-spacing:0.275px;">bird-ou…ion_23-214753</div>
<div class="a" style="left:0px;top:581px;width:727px;height:89px;background:#242424;"></div>
<svg style="left:540px;top:453px" width="19" height="13">
<path d="M0.8 2.5 H11.5 M9.4 2.5 V7.4 H12" fill="none" stroke="#c8c8c8" stroke-width="1.1"/>
<rect x="2.5" y="1.5" width="4.4" height="2" rx="1" fill="#c8c8c8"/>
<rect x="11.4" y="1.3" width="4.4" height="2.5" fill="#c8c8c8"/>
<rect x="11.4" y="6.2" width="4.4" height="2.4" fill="#c8c8c8"/>
<path d="M13.8 10.4 H17.5 L15.65 12.1Z" fill="#c8c8c8"/>
</svg>
<svg style="left:573px;top:449px" width="20" height="18">
<path d="M5.1 1 V10.4 M1.1 5.9 H10 M2.6 3.4 L7.6 8.4 M7.6 3.4 L2.6 8.4" stroke="#c8c8c8" stroke-width="0.9"/>
<circle cx="5.1" cy="5.9" r="2.4" fill="#c8c8c8"/>
<path d="M12.5 7 L18 9.8 V15.8 L12.5 17 L7 15.8 V9.8Z M7 9.8 L12.5 12.3 L18 9.8 M12.5 12.3 V17" fill="#242424" stroke="#c8c8c8" stroke-width="1.1" stroke-linejoin="round"/>
</svg>
<svg style="left:609px;top:452px" width="17" height="14">
<path d="M1 6.8 Q3 6 4.5 5 Q5 0.6 8.5 0.6 Q12 0.6 12.5 5 Q14 6 16 6.8 Z" fill="#c8c8c8"/>
<rect x="0.3" y="8.1" width="15.7" height="4.9" fill="#6a6a6a"/>
<rect x="6.8" y="5" width="2.8" height="6" fill="#c8c8c8"/>
<circle cx="7.2" cy="4.4" r="1" fill="#333"/><circle cx="10" cy="4.4" r="1" fill="#333"/>
</svg>
<svg style="left:635px;top:451px" width="16" height="15">
<rect x="4.8" y="0.7" width="10.4" height="11.1" fill="#c8c8c8"/>
<rect x="0.8" y="4" width="3.6" height="10.5" fill="#c8c8c8"/>
<rect x="0.8" y="12" width="10.5" height="2.5" fill="#c8c8c8"/>
<g fill="#3a3a3a"><circle cx="6.3" cy="2.5" r="0.6"/><circle cx="6.3" cy="4.7" r="0.6"/><circle cx="6.3" cy="6.9" r="0.6"/><circle cx="6.3" cy="9.1" r="0.6"/>
<circle cx="13.7" cy="2.5" r="0.6"/><circle cx="13.7" cy="4.7" r="0.6"/><circle cx="13.7" cy="6.9" r="0.6"/><circle cx="13.7" cy="9.1" r="0.6"/>
<circle cx="2.6" cy="6" r="0.6"/><circle cx="2.6" cy="8.2" r="0.6"/><circle cx="2.6" cy="10.4" r="0.6"/>
<rect x="8" y="6" width="4" height="1"/></g>
<path d="M11.3 11.8 V14.5" stroke="#242424" stroke-width="1"/>
</svg>
<svg style="left:661px;top:449px" width="17" height="17">
<circle cx="5.8" cy="11.7" r="4" fill="#242424" stroke="#c8c8c8" stroke-width="1.2"/>
<circle cx="8.1" cy="9.6" r="4" fill="#242424" stroke="#c8c8c8" stroke-width="1.2"/>
<circle cx="10.4" cy="7.5" r="4" fill="#5e5e5e" stroke="#c8c8c8" stroke-width="1.2"/>
</svg>
<svg style="left:695px;top:450px" width="18" height="17">
<rect x="1.6" y="3.4" width="14.4" height="11.8" fill="none" stroke="#c8c8c8" stroke-width="1.2"/>
<path d="M4.5 1.2 V3.5 M7.5 1.2 V3.5 M10.5 1.2 V3.5 M13.5 1.2 V3.5 M0 8 H1.6 M0 12 H1.6" stroke="#c8c8c8" stroke-width="1"/>
<path d="M3.5 6.3 C8 6.3 9 12.6 14.2 12.6" fill="none" stroke="#c8c8c8" stroke-width="1.1"/>
</svg>
<div class="a" style="left:727px;top:446px;width:13px;height:224px;background:#232323;border-left:1px solid #121212;border-top:1px solid #121212"></div>
<div class="a" style="left:728px;top:448px;width:6px;height:7.5px;background:#2f8ded;border-radius:6px 0 0 6px/3.75px 0 0 3.75px"></div>
<div class="a" style="left:735px;top:448px;width:1px;height:7.5px;background:#b0b0b0;"></div>
<div class="a" style="left:736.5px;top:448px;width:4px;height:7.5px;background:#7a7a7a;"></div>
<div class="a" style="left:728.5px;top:460px;width:1px;height:7px;background:#777;"></div>
<svg style="left:729.5px;top:462px" width="12" height="14"><path d="M0 0 H12 V5 L6 13.6 L0 5Z" fill="#2f8ded"/></svg>
<div class="a" style="left:729px;top:477px;width:5.5px;height:15px;background:#2f8ded;border-radius:5.5px 0 0 5.5px/7.5px 0 0 7.5px"></div>
<div class="a" style="left:736.5px;top:477px;width:4px;height:15px;background:#555;"></div>
<div class="a" style="left:735px;top:493px;width:5px;height:3px;background:#3bd23b;"></div>
<div class="a" style="left:701px;top:493px;width:26px;height:1px;background:#151515;"></div>
<div class="a" style="left:711px;top:482px;width:1px;height:10px;background:#0e0e0e;"></div>
<div class="a" style="left:728px;top:497px;width:7px;height:16px;background:#2b2b2b;"></div>
<div class="a" style="left:728px;top:513px;width:12px;height:1px;background:#1a1a1a;"></div>
<div class="a" style="left:736.5px;top:497px;width:4px;height:16px;background:#6d717d;"></div>
<div class="a" style="left:702px;top:498px;width:5px;height:14px;background:#1f1f1f;"></div>
<div class="a" style="left:706.5px;top:498px;width:5px;height:14px;background:#2a2a2a;"></div>
<div class="a" style="left:728px;top:514px;width:7px;height:16px;background:#2b2b2b;"></div>
<div class="a" style="left:728px;top:530px;width:12px;height:1px;background:#1a1a1a;"></div>
<div class="a" style="left:736.5px;top:514px;width:4px;height:16px;background:#6d717d;"></div>
<div class="a" style="left:702px;top:515px;width:5px;height:14px;background:#1f1f1f;"></div>
<div class="a" style="left:706.5px;top:515px;width:5px;height:14px;background:#2a2a2a;"></div>
<div class="a" style="left:728px;top:531px;width:7px;height:16px;background:#2b2b2b;"></div>
<div class="a" style="left:728px;top:547px;width:12px;height:1px;background:#1a1a1a;"></div>
<div class="a" style="left:736.5px;top:531px;width:4px;height:16px;background:#6d717d;"></div>
<div class="a" style="left:702px;top:532px;width:5px;height:14px;background:#1f1f1f;"></div>
<div class="a" style="left:706.5px;top:532px;width:5px;height:14px;background:#2a2a2a;"></div>
<div class="a" style="left:728px;top:548px;width:7px;height:16px;background:#2b2b2b;"></div>
<div class="a" style="left:728px;top:564px;width:12px;height:1px;background:#1a1a1a;"></div>
<div class="a" style="left:736.5px;top:548px;width:4px;height:16px;background:#6d717d;"></div>
<div class="a" style="left:702px;top:549px;width:5px;height:14px;background:#1f1f1f;"></div>
<div class="a" style="left:706.5px;top:549px;width:5px;height:14px;background:#2a2a2a;"></div>
<div class="a" style="left:728px;top:565px;width:7px;height:16px;background:#2b2b2b;"></div>
<div class="a" style="left:728px;top:581px;width:12px;height:1px;background:#1a1a1a;"></div>
<div class="a" style="left:736.5px;top:565px;width:4px;height:16px;background:#6d717d;"></div>
<div class="a" style="left:702px;top:566px;width:5px;height:14px;background:#1f1f1f;"></div>
<div class="a" style="left:706.5px;top:566px;width:5px;height:14px;background:#2a2a2a;"></div>
<div class="a" style="left:735px;top:470px;width:1.5px;height:200px;background:#3a90e8;"></div>
<div class="a" style="left:258px;top:466px;width:233px;height:204px;background:#bfbfbf;border-radius:5px 5px 0 0"></div>
<div class="a" style="left:485.5px;top:489px;width:5.5px;height:181px;background:#b8b8b8;"></div>
<div class="a" style="left:489px;top:492px;width:2px;height:178px;background:#a9a9a9;"></div>
<div class="a" style="left:258px;top:470px;width:233px;height:19px;background:#1464d4;"></div>
<div class="t" style="left:278.60px;top:472.45px;font-size:14px;color:#ffffff;">New</div>
<svg style="left:469.5px;top:473.8px" width="9" height="11"><path d="M0 0 L8.5 5.1 L0 10.2Z" fill="#ffffff"/></svg>
<div class="a" style="left:258px;top:494px;width:233px;height:1px;background:#a8a8a8;"></div>
<div class="t" style="left:279.00px;top:503.25px;font-size:14px;color:#0a0a0a;letter-spacing:0.286px;">Composition Settings...</div>
<div class="t" style="left:279.00px;top:522.15px;font-size:14px;color:#0a0a0a;letter-spacing:0.125px;">Reveal Composition in Project</div>
<div class="a" style="left:258px;top:545px;width:233px;height:1px;background:#a8a8a8;"></div>
<div class="t" style="left:279.00px;top:553.15px;font-size:14px;color:#0a0a0a;">Preview</div>
<svg style="left:469.5px;top:554.5px" width="9" height="11"><path d="M0 0 L8.5 5.1 L0 10.2Z" fill="#111"/></svg>
<div class="t" style="left:279.00px;top:571.95px;font-size:14px;color:#0a0a0a;">Switch 3D View</div>
<svg style="left:469.5px;top:573.5px" width="9" height="11"><path d="M0 0 L8.5 5.1 L0 10.2Z" fill="#111"/></svg>
<div class="t" style="left:279.00px;top:591.35px;font-size:14px;color:#8e8e8e;">Rename</div>
<div class="a" style="left:258px;top:614px;width:233px;height:1px;background:#a8a8a8;"></div>
<div class="t" style="left:279.00px;top:622.15px;font-size:14px;color:#0a0a0a;letter-spacing:0.120px;">Open in Essential Graphics</div>
<div class="a" style="left:258px;top:645px;width:233px;height:1px;background:#a8a8a8;"></div>
<div class="t" style="left:279.00px;top:653.05px;font-size:14px;color:#0a0a0a;letter-spacing:0.315px;">Composition Flowchart</div>
<div class="a" style="left:491px;top:466px;width:210px;height:204px;background:#bfbfbf;border-radius:5px 5px 0 0"></div>
<div class="t" style="left:512.40px;top:471.95px;font-size:14px;color:#0a0a0a;">Viewer</div>
<div class="a" style="left:491px;top:495px;width:210px;height:1px;background:#a8a8a8;"></div>
<div class="t" style="left:512.30px;top:503.15px;font-size:14px;color:#0a0a0a;">Text</div>
<div class="t" style="left:511.30px;top:521.85px;font-size:14px;color:#0a0a0a;">Solid...</div>
<div class="t" style="left:511.30px;top:540.85px;font-size:14px;color:#0a0a0a;">Light...</div>
<div class="t" style="left:511.30px;top:559.95px;font-size:14px;color:#0a0a0a;letter-spacing:0.275px;">Camera...</div>
<div class="t" style="left:511.30px;top:578.85px;font-size:14px;color:#0a0a0a;letter-spacing:0.390px;">Null Object</div>
<div class="t" style="left:511.30px;top:597.75px;font-size:14px;color:#0a0a0a;letter-spacing:0.110px;">Shape Layer</div>
<div class="t" style="left:512.30px;top:616.65px;font-size:14px;color:#0a0a0a;letter-spacing:0.167px;">Adjustment Layer</div>
<div class="t" style="left:512.30px;top:635.55px;font-size:14px;color:#0a0a0a;letter-spacing:0.209px;">Adobe Photoshop File...</div>
<div class="t" style="left:511.30px;top:654.55px;font-size:14px;color:#0a0a0a;letter-spacing:0.055px;">MAXON CINEMA 4D File...</div>
<svg style="left:328px;top:476.5px" width="13" height="19">
<path d="M0.2 0.2 L0.2 15.4 L3.8 12 L6.6 17.4 L9.4 16.1 L6.7 11 L11.2 11Z" fill="#fff"/>
<path d="M1.2 2.5 L1.2 13 L4 10.4 L6.9 15.9 L8.5 15.2 L5.6 10 L8.9 10Z" fill="#000"/>
</svg>
</body></html>
